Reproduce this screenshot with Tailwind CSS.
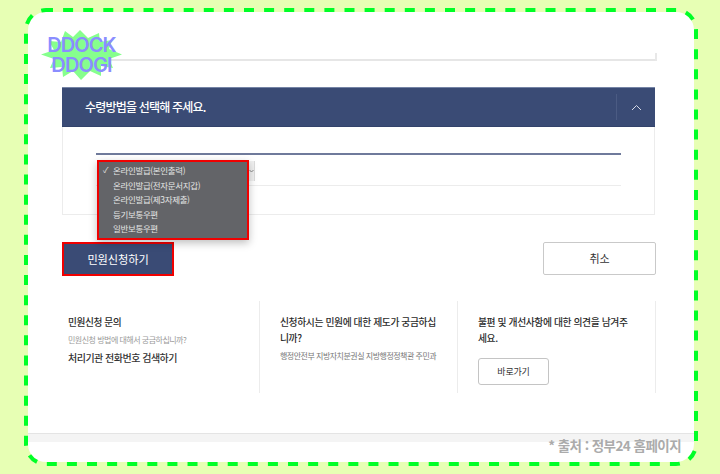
<!DOCTYPE html>
<html lang="ko">
<head>
<meta charset="utf-8">
<script src="https://cdn.jsdelivr.net/npm/@tailwindcss/browser@4"></script>
</head>
<body class="m-0 bg-[#e7ffb4]">
<div class="relative w-[720px] h-[474px] overflow-hidden bg-[#e7ffb4] font-['Noto_Sans_CJK_KR','Noto_Sans',sans-serif]">
  <main class="absolute left-[28px] top-[12px] w-[666px] h-[450px] bg-white rounded-[18px] overflow-hidden flex flex-col">
    <div class="ml-[34px] w-[593px] h-[49px] shrink-0 border-b-2 border-[#e6e6e6] relative">
      <div class="absolute right-[-2px] bottom-[-2px] w-[2px] h-[8px] bg-[#e8e8e8]"></div>
    </div>
    <section class="ml-[34px] mt-[26px] w-[593px] h-[128px] shrink-0 flex flex-col border-x border-b border-[#ececec]">
      <div class="h-[40px] shrink-0 -mx-px bg-[#3a4b75] border-t border-[#7584a5] border-b border-b-[#33436b] flex items-center justify-between">
        <h2 class="pl-[23px] text-[12px] font-medium text-white tracking-[-0.8px] leading-none">수령방법을 선택해 주세요.</h2>
        <div class="w-[39px] h-[26px] border-l border-[#4b5b83] flex items-center justify-center">
          <svg width="11" height="7" viewBox="0 0 11 7" fill="none" stroke="#d5dae6" stroke-width="1"><path d="M1 6 L5.5 1.5 L10 6"/></svg>
        </div>
      </div>
      <div class="relative flex-1 px-[33px] pt-[26px]">
        <div class="h-[2px] bg-[#6f7a9b]"></div>
        <div class="mt-[5px] relative h-[26px] border-b border-[#ececec]">
          <div class="absolute left-[153px] top-[1px] w-[6px] h-[20px] bg-[#f0f0f0] border-r border-[#dcdcdc] flex items-center">
            <svg width="5" height="4" viewBox="0 0 5 4" fill="none" stroke="#888" stroke-width="1"><path d="M0.5 1 L2.5 3 L4.5 1"/></svg>
          </div>
        </div>
        <ul class="absolute z-10 left-[34px] top-[33px] w-[152px] h-[80px] bg-[#636468] border-2 border-[#f00000] text-[#e4e4e4] text-[8.5px] leading-[14.6px] tracking-[-0.35px] pt-[1px] pl-[14px] shadow-[0_3px_8px_rgba(0,0,0,0.25)]">
          <li class="relative"><span class="absolute left-[-10px] text-[8px]">✓</span>온라인발급(본인출력)</li>
          <li>온라인발급(전자문서지갑)</li>
          <li>온라인발급(제3자제출)</li>
          <li>등기보통우편</li>
          <li>일반보통우편</li>
        </ul>
      </div>
    </section>
    <div class="ml-[34px] mt-[27px] w-[594px] flex items-start justify-between shrink-0">
      <button class="w-[112px] h-[34px] bg-[#3a4b75] border-2 border-[#f00000] text-white text-[11.2px] tracking-[-0.1px]">민원신청하기</button>
      <button class="w-[113px] h-[33px] bg-white border border-[#c9c9c9] rounded-[2px] text-[#333] text-[11px]">취소</button>
    </div>
    <section class="ml-[34px] mt-[25px] w-[594px] h-[92px] shrink-0 flex text-[#2b2b2b] tracking-[-0.4px]">
      <div class="w-[198px] h-full border-r border-[#ececec] pl-[6px] pt-[13px]">
        <h3 class="text-[9.7px] font-medium leading-[16px]">민원신청 문의</h3>
        <p class="mt-[3px] text-[8px] tracking-[-0.5px] leading-[14px] text-[#9a9a9a]">민원신청 방법에 대해서 궁금하십니까?</p>
        <p class="mt-[3px] text-[10px] tracking-[-0.5px] font-medium leading-[16px] text-[#333]">처리기관 전화번호 검색하기</p>
      </div>
      <div class="w-[198px] h-full border-r border-[#ececec] pl-[20px] pr-[18px] pt-[13px]">
        <h3 class="text-[9.8px] font-medium leading-[16px]">신청하시는 민원에 대한 제도가 궁금하십니까?</h3>
        <p class="mt-[3px] text-[8px] tracking-[-0.5px] leading-[14px] text-[#777] whitespace-nowrap">행정안전부 지방자치분권실 지방행정정책관 주민과</p>
      </div>
      <div class="w-[198px] h-full border-r border-[#ececec] pl-[20px] pr-[24px] pt-[13px]">
        <h3 class="text-[9.8px] font-medium leading-[16px]">불편 및 개선사항에 대한 의견을 남겨주세요.</h3>
        <button class="mt-[12px] w-[71px] h-[27px] border border-[#c4c4c4] rounded-[3px] bg-white text-[9px] text-[#333] tracking-[-0.2px]">바로가기</button>
      </div>
    </section>
    <div class="mt-[40px] h-[9px] shrink-0 bg-[#f4f4f4] border-t border-[#e4e4e4]"></div>
  </main>

  <svg class="absolute left-0 top-0 pointer-events-none" width="720" height="474" fill="none">
    <rect x="26" y="10" width="670" height="454" rx="20" stroke="#00ff27" stroke-width="4" stroke-dasharray="10 10.1" stroke-dashoffset="3"/>
  </svg>

  <div class="absolute left-[41px] top-[30px] w-[81px] h-[50px]">
    <svg class="absolute inset-0" width="81" height="50" viewBox="0 0 81 50">
      <polygon fill="#86ff8d" points="0,24.5 13,20 8,11 20,12 24,1 32,7 39,0 47,8 58,3 59,12 71,10 68,19 81,24.5 68,29 72,38 60,36 60,46 49,41 40,50 32,41 22,47 21,37 9,38 13,29"/>
    </svg>
    <div class="absolute inset-0 flex flex-col items-center pt-[5px] text-[#8a8dff] font-semibold text-[20px] leading-[20px] tracking-[-0.9px] font-['Inter','Liberation_Sans',sans-serif]">
      <span>DDOCK</span>
      <span>DDOGI</span>
    </div>
  </div>

  <p class="absolute right-[39px] top-[435px] text-[13.5px] font-bold leading-[20px] text-[#ababab] tracking-[-0.55px]">* 출처 : 정부24 홈페이지</p>
</div>
</body>
</html>
